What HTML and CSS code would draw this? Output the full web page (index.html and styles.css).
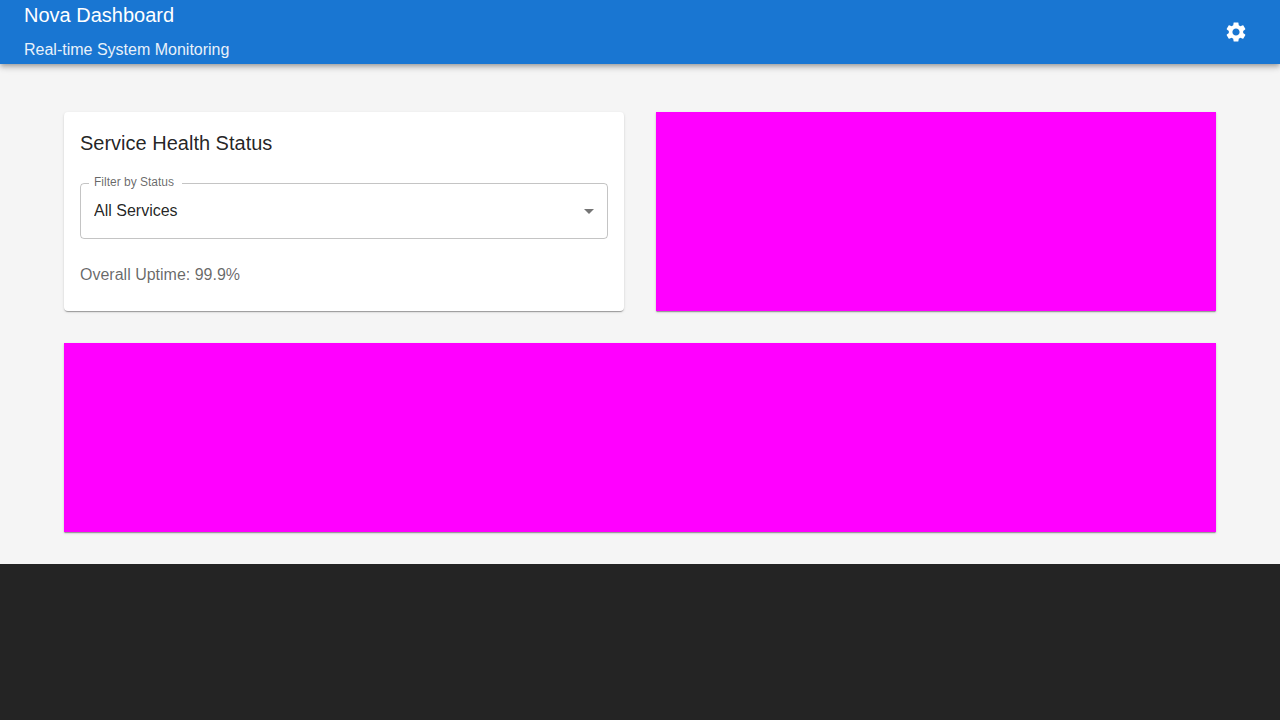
FILE: index.html
```html
<!DOCTYPE html>
<html lang="en">
<head>
  <meta charset="utf-8">
  <meta name="viewport" content="width=device-width, initial-scale=1">
  <title>Nova Dashboard</title>
  <link rel="stylesheet" href="styles.css">
</head>
<body>
  <div class="app">
    <header class="app-bar">
      <div class="brand">
        <h1 class="brand-title">Nova Dashboard</h1>
        <p class="brand-subtitle">Real-time System Monitoring</p>
      </div>
      <button class="icon-button" type="button" aria-label="Settings">
        <svg class="icon" viewBox="0 0 24 24" aria-hidden="true"><path d="M19.14 12.94c.04-.3.06-.61.06-.94 0-.32-.02-.64-.07-.94l2.03-1.58c.18-.14.23-.41.12-.61l-1.92-3.32c-.12-.22-.37-.29-.59-.22l-2.39.96c-.5-.38-1.03-.7-1.62-.94l-.36-2.54c-.04-.24-.24-.41-.48-.41h-3.84c-.24 0-.43.17-.47.41l-.36 2.54c-.59.24-1.13.57-1.62.94l-2.39-.96c-.22-.08-.47 0-.59.22L2.74 8.87c-.12.21-.08.47.12.61l2.03 1.58c-.05.3-.09.63-.09.94s.02.64.07.94l-2.03 1.58c-.18.14-.23.41-.12.61l1.92 3.32c.12.22.37.29.59.22l2.39-.96c.5.38 1.03.7 1.62.94l.36 2.54c.05.24.24.41.48.41h3.84c.24 0 .44-.17.47-.41l.36-2.54c.59-.24 1.13-.56 1.62-.94l2.39.96c.22.08.47 0 .59-.22l1.92-3.32c.12-.22.07-.47-.12-.61l-2.01-1.58zM12 15.6c-1.98 0-3.6-1.62-3.6-3.6s1.62-3.6 3.6-3.6 3.6 1.62 3.6 3.6-1.62 3.6-3.6 3.6z"/></svg>
      </button>
    </header>
    <main class="content">
      <section class="card health">
        <h2 class="card-title">Service Health Status</h2>
        <div class="field">
          <label class="field-label" for="status">Filter by Status</label>
          <select class="field-select" id="status">
            <option>All Services</option>
          </select>
          <svg class="icon field-arrow" viewBox="0 0 24 24" aria-hidden="true"><path d="M7 10l5 5 5-5z"/></svg>
        </div>
        <p class="uptime">Overall Uptime: 99.9%</p>
      </section>
      <section class="card panel"></section>
      <section class="card panel panel-wide"></section>
    </main>
  </div>
</body>
</html>
```
FILE: styles.css
```css
* {
  box-sizing: border-box;
}

body {
  margin: 0;
  background: #242424;
  color: rgba(0, 0, 0, 0.87);
  font-family: Helvetica, "Liberation Sans", Arial, sans-serif;
  font-size: 16px;
  line-height: 24px;
}

h1,
h2,
p {
  margin: 0;
  font-weight: 400;
}

.app {
  background: #f5f5f5;
}

.app-bar {
  position: relative;
  display: flex;
  align-items: center;
  justify-content: space-between;
  min-height: 64px;
  padding: 0 24px;
  background: #1976d2;
  color: #fff;
  box-shadow: 0 2px 4px -1px rgba(0, 0, 0, 0.2), 0 4px 5px 0 rgba(0, 0, 0, 0.14), 0 1px 10px 0 rgba(0, 0, 0, 0.12);
}

.brand {
  display: grid;
  gap: 6px;
}

.brand-title {
  font-size: 20px;
  line-height: 30px;
}

.brand-subtitle {
  line-height: 28px;
  opacity: 0.9;
}

.icon-button {
  display: flex;
  padding: 8px;
  border: 0;
  border-radius: 50%;
  background: none;
  color: inherit;
  cursor: pointer;
}

.icon {
  width: 24px;
  height: 24px;
  fill: currentColor;
}

.content {
  display: grid;
  grid-template-columns: 1fr 1fr;
  gap: 32px;
  padding: 48px 64px 32px;
}

.card {
  border-radius: 4px;
  background: #fff;
  box-shadow: 0 2px 1px -1px rgba(0, 0, 0, 0.2), 0 1px 1px 0 rgba(0, 0, 0, 0.14), 0 1px 3px 0 rgba(0, 0, 0, 0.12);
}

.health {
  padding: 16px 16px 24px;
}

.card-title {
  margin-bottom: 25px;
  font-size: 20px;
  line-height: 30px;
}

.field {
  position: relative;
  margin-bottom: 24px;
}

.field-label {
  position: absolute;
  top: -9px;
  left: 9px;
  padding: 0 8px 0 5px;
  background: #fff;
  color: rgba(0, 0, 0, 0.6);
  font-size: 12px;
  line-height: 16px;
}

.field-select {
  display: block;
  width: 100%;
  height: 56px;
  padding: 0 32px 0 13px;
  border: 1px solid rgba(0, 0, 0, 0.23);
  border-radius: 4px;
  appearance: none;
  background: transparent;
  color: inherit;
  font: inherit;
}

.field-arrow {
  position: absolute;
  top: 16px;
  right: 7px;
  color: rgba(0, 0, 0, 0.54);
  pointer-events: none;
}

.uptime {
  color: rgba(0, 0, 0, 0.6);
}

.panel {
  border-radius: 0;
  background: #f0f;
}

.panel-wide {
  grid-column: 1 / -1;
  min-height: 189px;
}
```
